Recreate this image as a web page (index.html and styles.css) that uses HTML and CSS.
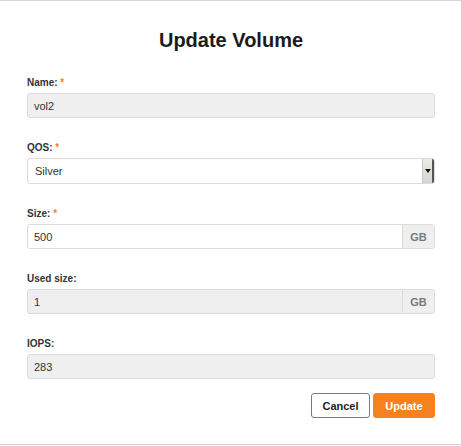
FILE: index.html
```html
<!DOCTYPE html>
<html>
<head>
<meta charset="utf-8">
<link rel="stylesheet" href="styles.css">
</head>
<body>
<div class="modal">
  <h1 class="title">Update Volume</h1>
  <div class="field">
    <div class="label">Name: <span class="req">*</span></div>
    <div class="input readonly"><span class="val">vol2</span></div>
  </div>
  <div class="field">
    <div class="label">QOS: <span class="req">*</span></div>
    <div class="input select"><span class="val sel">Silver</span><span class="arrow"><span class="tri"></span></span></div>
  </div>
  <div class="field">
    <div class="label">Size: <span class="req">*</span></div>
    <div class="input white"><span class="val">500</span><span class="addon">GB</span></div>
  </div>
  <div class="field">
    <div class="label">Used size:</div>
    <div class="input readonly"><span class="val">1</span><span class="addon">GB</span></div>
  </div>
  <div class="field">
    <div class="label">IOPS:</div>
    <div class="input readonly"><span class="val">283</span></div>
  </div>
  <div class="actions">
    <button class="btn cancel">Cancel</button>
    <button class="btn update">Update</button>
  </div>
</div>
</body>
</html>
```
FILE: styles.css
```css
* { box-sizing: border-box; }
html, body { margin: 0; padding: 0; background: #fff; }
body { font-family: "Liberation Sans", Arial, Helvetica, sans-serif; color: #333; }
.modal {
  width: 461px;
  height: 445px;
  border-top: 1px solid #d4d4d4;
  border-bottom: 1px solid #d4d4d4;
  padding: 27px 26px 0 27px;
}
.title {
  margin: 0 0 25px;
  font-size: 20px;
  line-height: 24px;
  font-weight: bold;
  text-align: center;
  color: #1a1a1a;
}
.field { margin-bottom: 24px; }
.label {
  font-size: 10px;
  line-height: 12px;
  font-weight: bold;
  color: #333;
  margin-bottom: 4px;
}
.req { color: #f5821f; }
.input {
  display: flex;
  align-items: stretch;
  height: 25px;
  border: 1px solid #dcdcdc;
  border-radius: 3px;
  font-size: 11px;
  overflow: hidden;
}
.readonly { background: #efefef; }
.white { background: #fff; }
.val {
  flex: 1;
  display: flex;
  align-items: center;
  padding-left: 6px;
  color: #333;
}
.sel { padding-left: 7px; }
.select { height: 26px; background: #fff; padding: 0 0 0 0; }
.arrow {
  width: 12px;
  margin: 0 0 0 0;
  background: linear-gradient(#ebebe8, #d6d5d0);
  border-left: 1px solid #c8c8c8;
  border-right: 2px solid #555;
  display: flex;
  align-items: center;
  justify-content: center;
}
.tri {
  width: 0;
  height: 0;
  border-left: 3px solid transparent;
  border-right: 3px solid transparent;
  border-top: 4px solid #111;
}
.addon {
  width: 32px;
  display: flex;
  align-items: center;
  justify-content: center;
  background: #efefef;
  border-left: 1px solid #dcdcdc;
  color: #7a7a7a;
  font-weight: bold;
  font-size: 11px;
}
.actions {
  display: flex;
  justify-content: flex-end;
  gap: 3px;
  margin-top: -10px;
}
.btn {
  height: 25px;
  border-radius: 3px;
  font-family: "Liberation Sans", Arial, Helvetica, sans-serif;
  font-size: 11px;
  font-weight: bold;
  padding: 0;
  cursor: pointer;
}
.cancel {
  width: 59px;
  background: #fff;
  border: 1px solid #7a7a7a;
  color: #222;
}
.update {
  width: 62px;
  background: #f5821f;
  border: 1px solid #f5821f;
  color: #fff;
}
```
